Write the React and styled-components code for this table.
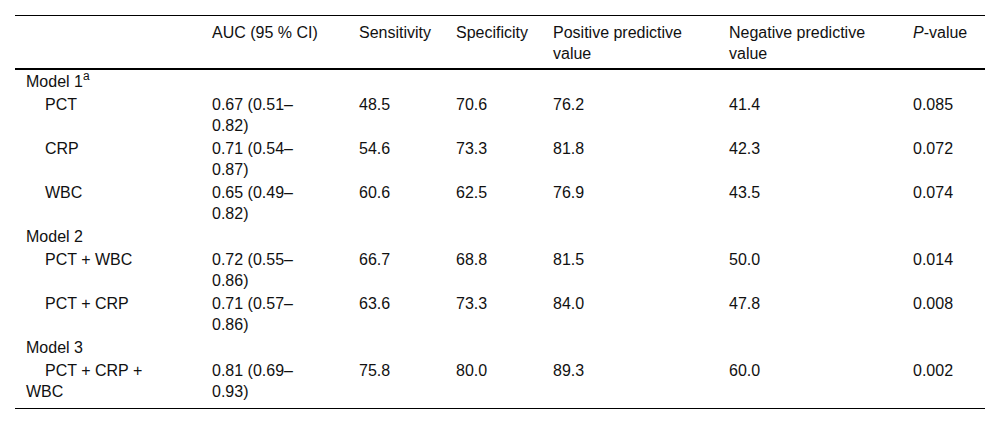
import React from "react";
import styled, { createGlobalStyle } from "styled-components";

const Global = createGlobalStyle`
  html, body { margin: 0; padding: 0; background: #fff; }
  body { font-family: "Liberation Sans", Arial, sans-serif; color: #111; }
`;

const Page = styled.div`
  padding: 15px 15px 0 15px;
`;

const Table = styled.div`
  width: 970px;
  border-top: 1px solid #000;
  border-bottom: 1px solid #000;
`;

const Row = styled.div`
  display: grid;
  grid-template-columns: 186px 147px 97px 97px 176px 184px 83px;
  & > :nth-child(1) { padding-right: 37px; }
  & > :nth-child(2) { padding-right: 25px; }
  & > :nth-child(3) { padding-right: 10px; }
  & > :nth-child(4) { padding-right: 10px; }
  & > :nth-child(5) { padding-right: 15px; }
  & > :nth-child(6) { padding-right: 18px; }
  & > :nth-child(7) { padding-right: 0; }
`;

const HeadRow = styled(Row)`
  border-bottom: 2px solid #000;
`;

const Cell = styled.div`
  box-sizing: border-box;
  font-size: 16px;
  line-height: 21px;
  padding-left: 11px;
  padding-top: ${(p) => (p.$head ? "6px" : "1px")};
  padding-bottom: ${(p) => (p.$head ? "4px" : p.$last ? "6px" : "1px")};
  text-indent: ${(p) => (p.$indent ? "19px" : "0")};
`;

const Sup = styled.sup`
  font-size: 12px;
  line-height: 0;
  vertical-align: 7px;
`;

const Em = styled.i`
  font-style: italic;
`;

const headers = [
  "",
  "AUC (95 % CI)",
  "Sensitivity",
  "Specificity",
  "Positive predictive value",
  "Negative predictive value",
  <>
    <Em>P</Em>-value
  </>,
];

const rows = [
  { group: <>Model 1<Sup>a</Sup></> },
  { cells: ["PCT", "0.67 (0.51–0.82)", "48.5", "70.6", "76.2", "41.4", "0.085"] },
  { cells: ["CRP", "0.71 (0.54–0.87)", "54.6", "73.3", "81.8", "42.3", "0.072"] },
  { cells: ["WBC", "0.65 (0.49–0.82)", "60.6", "62.5", "76.9", "43.5", "0.074"] },
  { group: "Model 2" },
  { cells: ["PCT + WBC", "0.72 (0.55–0.86)", "66.7", "68.8", "81.5", "50.0", "0.014"] },
  { cells: ["PCT + CRP", "0.71 (0.57–0.86)", "63.6", "73.3", "84.0", "47.8", "0.008"] },
  { group: "Model 3" },
  { cells: ["PCT + CRP + WBC", "0.81 (0.69–0.93)", "75.8", "80.0", "89.3", "60.0", "0.002"] },
];

export default function App() {
  return (
    <>
      <Global />
      <Page>
        <Table>
          <HeadRow>
            {headers.map((h, i) => (
              <Cell key={i} $head>
                {h}
              </Cell>
            ))}
          </HeadRow>
          {rows.map((r, ri) => {
            const last = ri === rows.length - 1;
            if (r.group) {
              return (
                <Row key={ri}>
                  <Cell $last={last}>{r.group}</Cell>
                  {[1, 2, 3, 4, 5, 6].map((k) => (
                    <Cell key={k} $last={last} />
                  ))}
                </Row>
              );
            }
            return (
              <Row key={ri}>
                {r.cells.map((c, ci) => (
                  <Cell key={ci} $indent={ci === 0} $last={last}>
                    {c}
                  </Cell>
                ))}
              </Row>
            );
          })}
        </Table>
      </Page>
    </>
  );
}
